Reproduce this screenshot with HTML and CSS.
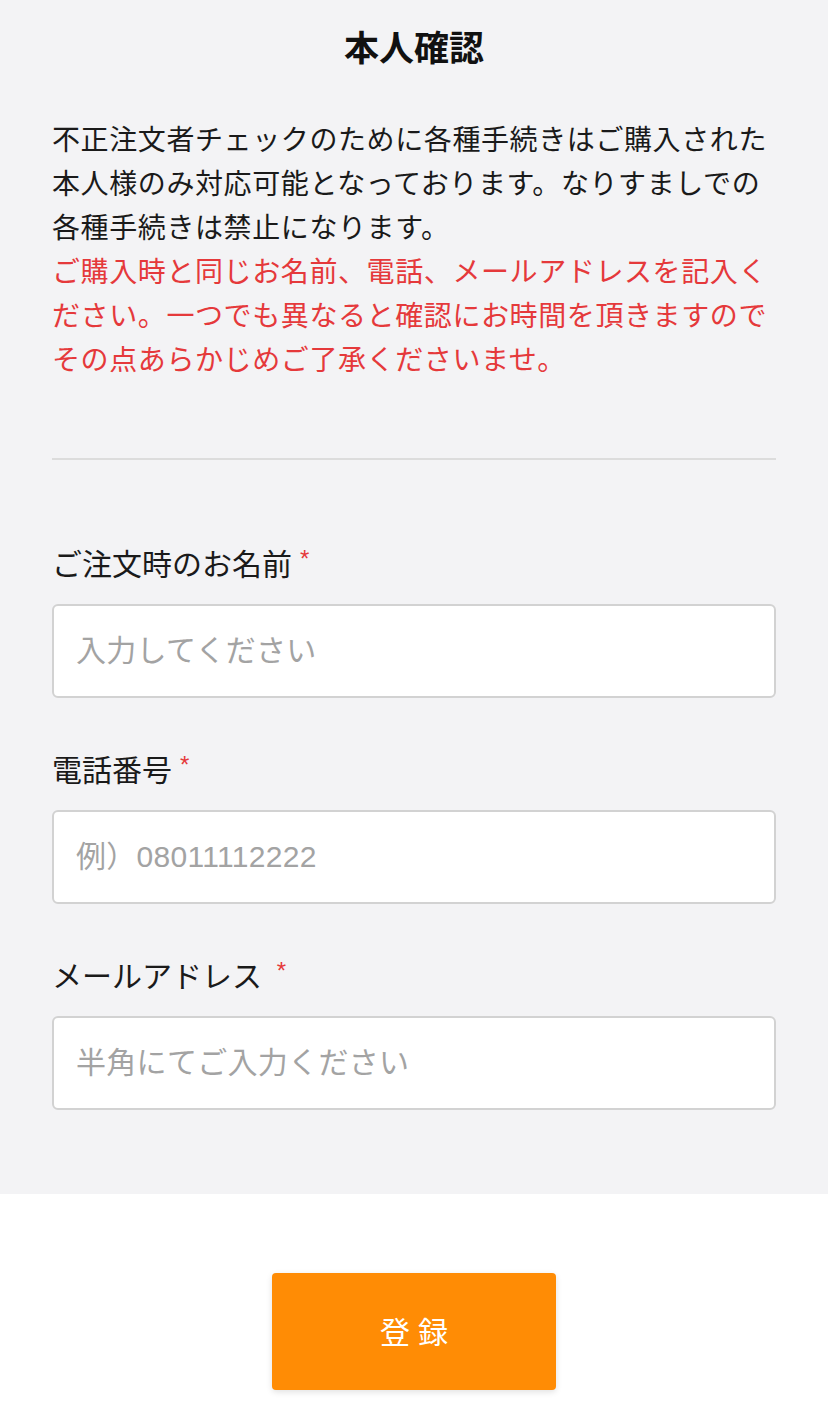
FILE: index.html
```html
<!DOCTYPE html>
<html lang="ja">
<head>
    <meta charset="UTF-8">
    <meta name="viewport" content="width=device-width, initial-scale=1.0">
    <title>本人確認</title>
    <link rel="stylesheet" href="styles.css">
</head>
<body>
    <div class="form-area">
        <h1 class="title">本人確認</h1>

        <div class="notice">
            <p class="notice-text">不正注文者チェックのために各種手続きはご購入された<br>本人様のみ対応可能となっております。なりすましでの<br>各種手続きは禁止になります。</p>
            <p class="notice-warn">ご購入時と同じお名前、電話、メールアドレスを記入く<br>ださい。一つでも異なると確認にお時間を頂きますので<br>その点あらかじめご了承くださいませ。</p>
        </div>

        <hr class="divider">

        <div class="field">
            <label class="field-label" for="name">ご注文時のお名前<span class="req">*</span></label>
            <input class="field-input" id="name" type="text" placeholder="入力してください">
        </div>

        <div class="field">
            <label class="field-label" for="tel">電話番号<span class="req">*</span></label>
            <input class="field-input" id="tel" type="tel" placeholder="例）08011112222">
        </div>

        <div class="field">
            <label class="field-label" for="mail">メールアドレス <span class="req">*</span></label>
            <input class="field-input" id="mail" type="email" placeholder="半角にてご入力ください">
        </div>
    </div>

    <div class="submit-area">
        <button class="submit-btn" type="button">登録</button>
    </div>
</body>
</html>
```

FILE: styles.css
```css
body {
    margin: 0;
    font-family: "Noto Sans CJK JP", "Noto Sans", sans-serif;
    color: #1a1a1a;
    background: #fff;
}
.form-area {
    background: #f3f3f5;
    padding: 22px 52px 84px;
}
.title {
    margin: 0;
    font-size: 35px;
    line-height: 48px;
    font-weight: bold;
    text-align: center;
    color: #111;
}
.notice {
    margin-top: 46px;
}
.notice p {
    margin: 0;
    font-size: 28px;
    line-height: 44px;
    letter-spacing: 0.6px;
}
.notice-text {
    color: #1a1a1a;
}
.notice-warn {
    color: #e5393b;
}
.divider {
    margin: 78px 0 0;
    border: 0;
    border-top: 2px solid #dcdcdc;
}
.field {
    display: flex;
    flex-direction: column;
    gap: 22px;
    margin-top: 50px;
}
.divider + .field {
    margin-top: 82px;
}
.field-label {
    font-size: 30px;
    line-height: 40px;
    color: #1a1a1a;
}
.req {
    color: #e5393b;
    font-family: "Liberation Sans", sans-serif;
    font-size: 24px;
    line-height: 34px;
    vertical-align: top;
    margin-left: 8px;
}
.field-input {
    box-sizing: border-box;
    height: 94px;
    width: 100%;
    padding: 0 22px;
    border: 2px solid #d2d2d2;
    border-radius: 6px;
    background: #fff;
    font-family: "Liberation Sans", "Noto Sans CJK JP", sans-serif;
    font-size: 30px;
    letter-spacing: 0.3px;
    color: #333;
    outline: none;
}
.field-input::placeholder {
    color: #a3a3a3;
}
.submit-area {
    display: flex;
    justify-content: center;
    padding: 79px 0 36px;
}
.submit-btn {
    width: 284px;
    height: 117px;
    border: 0;
    border-radius: 4px;
    background: #ff8c05;
    color: #fff;
    font-family: "Noto Sans CJK JP", sans-serif;
    font-size: 30px;
    letter-spacing: 8px;
    padding: 0 0 4px 8px;
    box-shadow: 0 2px 6px rgba(0, 0, 0, 0.12);
    cursor: pointer;
}
```
